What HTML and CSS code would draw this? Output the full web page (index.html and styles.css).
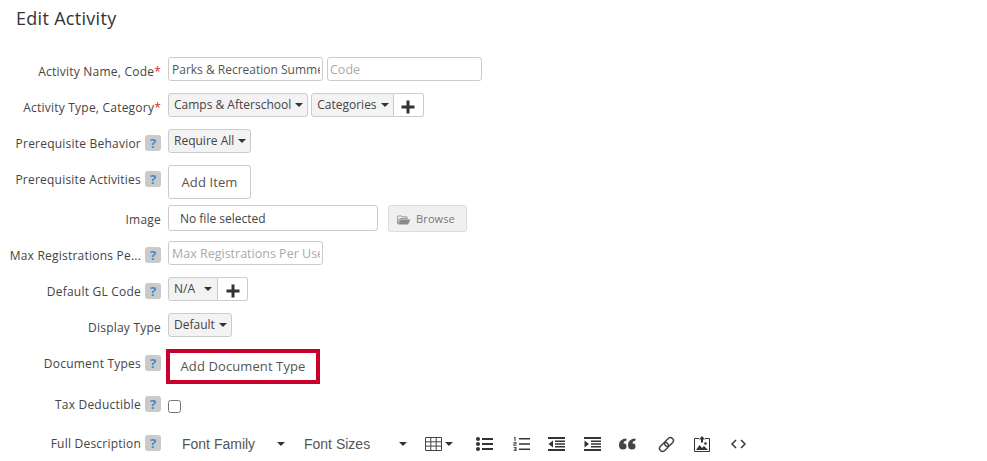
FILE: index.html
```html
<html lang="en">
  <head>
    <meta charset="UTF-8" />
    <title>Edit Activity</title>
    <link rel="stylesheet" href="styles.css">
  </head>
  <body>
    <h1 class="title">Edit Activity</h1>

    <form class="form">
      <!-- Name -->
      <div class="row">
        <label class="label">Activity Name, Code<span class="req">*</span></label>
        <div class="controls">
          <input class="input input-name" type="text" value="Parks &amp; Recreation Summer Camp" />
          <input class="input input-code" type="text" placeholder="Code" />
        </div>
      </div>

      <!-- Type -->
      <div class="row">
        <label class="label">Activity Type, Category<span class="req">*</span></label>
        <div class="controls controls-type">
          <button type="button" class="select">Camps &amp; Afterschool<span class="caret"></span></button>
          <div class="group">
            <button type="button" class="select select-cat">Categories<span class="caret"></span></button>
            <button type="button" class="plus">
              <svg width="14" height="14" viewBox="0 0 14 14"><path d="M5.500 0.500h3v5h5v3h-5v5h-3v-5h-5v-3h5z" fill="#333"/></svg>
            </button>
          </div>
        </div>
      </div>

      <div class="row">
        <label class="label">Prerequisite Behavior<span class="help">?</span></label>
        <div class="controls">
          <button type="button" class="select">Require All<span class="caret"></span></button>
        </div>
      </div>

      <div class="row row-tall">
        <label class="label">Prerequisite Activities<span class="help">?</span></label>
        <div class="controls">
          <button type="button" class="btn btn-item">Add Item</button>
        </div>
      </div>

      <!-- Image -->
      <div class="row row-image">
        <label class="label">Image</label>
        <div class="controls controls-file">
          <div class="file-name">No file selected</div>
          <button type="button" class="browse">
            <svg width="14" height="10" viewBox="0 0 15 11"><path d="M0.500 9.500v-7.500q0-1 1-1h3l1 1h4.500q1 0 1 1v1h-8z" fill="none" stroke="#8a8a8a"/><path d="M3.500 5h11l-2.500 5.500h-11z" fill="#8a8a8a"/></svg>
            Browse
          </button>
        </div>
      </div>

      <div class="row">
        <label class="label">Max Registrations Pe...<span class="help">?</span></label>
        <div class="controls">
          <input class="input input-name" type="text" placeholder="Max Registrations Per User" />
        </div>
      </div>

      <div class="row">
        <label class="label">Default GL Code<span class="help">?</span></label>
        <div class="controls">
          <div class="group">
            <button type="button" class="select select-gl">N/A<span class="caret"></span></button>
            <button type="button" class="plus">
              <svg width="14" height="14" viewBox="0 0 14 14"><path d="M5.500 0.500h3v5h5v3h-5v5h-3v-5h-5v-3h5z" fill="#333"/></svg>
            </button>
          </div>
        </div>
      </div>

      <div class="row">
        <label class="label">Display Type</label>
        <div class="controls">
          <button type="button" class="select">Default<span class="caret"></span></button>
        </div>
      </div>

      <div class="row row-doc">
        <label class="label">Document Types<span class="help">?</span></label>
        <div class="controls">
          <button type="button" class="btn btn-doc">Add Document Type</button>
        </div>
      </div>

      <div class="row row-tax">
        <label class="label label-tax">Tax Deductible<span class="help">?</span></label>
        <div class="controls">
          <input class="check" type="checkbox" />
        </div>
      </div>

      <!-- Editor toolbar -->
      <div class="row row-editor">
        <label class="label label-editor">Full Description<span class="help">?</span></label>
        <div class="toolbar">
          <span class="tool-select tool-family">Font Family<span class="caret"></span></span>
          <span class="tool-select tool-size">Font Sizes<span class="caret"></span></span>
          <span class="tool tool-table">
            <svg width="17" height="14" viewBox="0 0 17 14"><path d="M0.500 0.500h16v13h-16zM0.500 4.800h16M0.500 9.100h16M5.800 0.500v13M11.200 0.500v13" fill="none" stroke="#444"/></svg>
            <span class="caret"></span>
          </span>
          <span class="tool tool-ul">
            <svg width="17" height="14" viewBox="0 0 17 14"><g fill="#333"><circle cx="2" cy="2" r="2"/><circle cx="2" cy="7" r="2"/><circle cx="2" cy="12" r="2"/><path d="M6 1h11v2h-11zM6 6h11v2h-11zM6 11h11v2h-11z"/></g></svg>
          </span>
          <span class="tool tool-ol">
            <svg width="17" height="14" viewBox="0 0 17 14"><g fill="#333"><path d="M6 1h11v1.500h-11zM6 6.200h11v1.500h-11zM6 11.500h11v1.500h-11z"/><path d="M1 0h1.500v4h-1v-3h-.5zM0.500 5h3v2.300h-2v.700h2v.800h-3v-2.300h2v-.700h-2zM0.500 10h3v4h-3v-.800h2v-.800h-1.500v-.700h1.500v-.900h-2z"/></g></svg>
          </span>
          <span class="tool tool-out">
            <svg width="17" height="14" viewBox="0 0 17 14"><g fill="#333"><path d="M0 0h17v2h-17zM7 3.500h10v1.500h-10zM7 6.300h10v1.500h-10zM7 9.100h10v1.500h-10zM0 12h17v2h-17zM5 3.500v7l-4.500-3.500z"/></g></svg>
          </span>
          <span class="tool tool-in">
            <svg width="17" height="14" viewBox="0 0 17 14"><g fill="#333"><path d="M0 0h17v2h-17zM7 3.500h10v1.500h-10zM7 6.300h10v1.500h-10zM7 9.100h10v1.500h-10zM0 12h17v2h-17zM0.500 3.500v7l4.500-3.500z"/></g></svg>
          </span>
          <span class="tool tool-quote">
            <svg width="17" height="12" viewBox="0 0 17 12"><g fill="#444"><path d="M7.500 0.500v2q-3 .5-3 3h1q2 0 2 3t-3.500 3q-4 0-4-4.500q0-6 7.500-6.500z"/><path d="M16.500 0.500v2q-3 .5-3 3h1q2 0 2 3t-3.500 3q-4 0-4-4.500q0-6 7.500-6.500z"/></g></svg>
          </span>
          <span class="tool tool-link">
            <svg width="17" height="17" viewBox="0 0 17 17"><g fill="none" stroke="#444" stroke-width="1.500" transform="rotate(-45 8.500 8.500)"><rect x="0" y="5.500" width="10" height="6" rx="3"/><rect x="7" y="5.500" width="10" height="6" rx="3"/></g></svg>
          </span>
          <span class="tool tool-image">
            <svg width="16" height="16" viewBox="0 0 16 16"><path d="M5 2.500h-4.500v13h15v-13h-4.500" fill="none" stroke="#333"/><path d="M8 0l3 3.500h-2v3h-2v-3h-2z" fill="#333"/><path d="M2 14l3.500-5 2.500 3 2-2 4 4z" fill="#333"/><circle cx="11.500" cy="7.500" r="1.300" fill="#333"/></svg>
          </span>
          <span class="tool tool-code">
            <svg width="15" height="10" viewBox="0 0 15 10"><path d="M5 1l-4 4 4 4M10 1l4 4-4 4" fill="none" stroke="#333" stroke-width="1.500"/></svg>
          </span>
        </div>
      </div>
    </form>
  </body>
</html>
```

FILE: styles.css
```css
body {
  margin: 0;
  height: 461px;
  overflow: hidden;
  background-color: white;
  font-family: "Open Sans", sans-serif;
  font-size: 12px;
  color: #444;
}
.title {
  margin: 0;
  padding: 7px 0 0 16px;
  font-size: 18px;
  font-weight: 500;
  line-height: 23px;
  letter-spacing: 0.3px;
  color: #333;
}
.form {
  padding-top: 27px;
}
.row {
  display: flex;
  height: 24px;
  margin-bottom: 12px;
}
.row-tall {
  height: 34px;
  margin-bottom: 6px;
}
.row-image {
  height: 26px;
  margin-bottom: 10px;
}
.row-doc {
  height: 35px;
  margin-bottom: 16px;
}
.row-tax {
  height: 14px;
  margin-bottom: 16px;
}
.label {
  width: 161px;
  flex-shrink: 0;
  padding-top: 5px;
  text-align: right;
  line-height: 19px;
  letter-spacing: 0.22px;
  white-space: nowrap;
  color: #444;
}
.label-tax {
  padding-top: 0;
  margin-top: -5px;
}
.label-editor {
  padding-top: 4px;
}
.req {
  color: #c9302c;
}
.help {
  display: inline-block;
  width: 16px;
  height: 16px;
  margin-left: 4px;
  border-radius: 3px;
  background-color: #cacaca;
  color: #428bca;
  font-weight: 700;
  font-size: 13px;
  line-height: 16px;
  text-align: center;
  letter-spacing: 0;
}
.controls {
  display: flex;
  gap: 4px;
  margin-left: 7px;
}
.controls-type {
  gap: 3px;
}
.controls-file {
  gap: 10px;
}
.input {
  box-sizing: border-box;
  height: 24px;
  padding: 0 2px 0 3px;
  border: 1px solid #ccc;
  border-radius: 3px;
  font-family: "Open Sans", sans-serif;
  font-size: 12px;
  color: #555;
  background-color: white;
}
.input::placeholder {
  font-size: 12.500px;
  color: #aaa;
}
.input-name {
  width: 155px;
}
.input-code {
  width: 155px;
  padding-left: 2px;
}
.select {
  box-sizing: border-box;
  height: 24px;
  padding: 0 4px 2px 5px;
  border: 1px solid #ccc;
  border-radius: 3px;
  background-color: #f3f3f3;
  font-family: "Open Sans", sans-serif;
  font-size: 12px;
  color: #444;
  white-space: nowrap;
}
.select-cat {
  border-radius: 3px 0 0 3px;
}
.select-gl {
  width: 50px;
  border-radius: 3px 0 0 3px;
  text-align: left;
}
.select-gl .caret {
  margin-left: 9px;
}
.group {
  display: flex;
}
.plus {
  box-sizing: border-box;
  width: 30px;
  height: 24px;
  padding: 0;
  border: 1px solid #ccc;
  border-left: none;
  border-radius: 0 3px 3px 0;
  background-color: white;
}
.plus svg {
  display: block;
  margin: 3px auto 0;
}
.caret {
  display: inline-block;
  margin-left: 4px;
  border-top: 4px solid #333;
  border-left: 4px solid transparent;
  border-right: 4px solid transparent;
  vertical-align: middle;
}
.btn {
  box-sizing: border-box;
  background-color: white;
  font-family: "Open Sans", sans-serif;
  font-size: 13px;
  letter-spacing: 0.1px;
  color: #555;
}
.btn-item {
  width: 83px;
  height: 34px;
  padding-bottom: 2px;
  border: 1px solid #ccc;
  border-radius: 3px;
}
.btn-doc {
  width: 154px;
  height: 35px;
  margin-left: -2px;
  border: 4px solid #c8002b;
  padding: 0 0 2px;
}
.file-name {
  box-sizing: border-box;
  width: 210px;
  height: 26px;
  padding: 1px 0 0 11px;
  border: 1px solid #ccc;
  border-radius: 3px;
  line-height: 24px;
  color: #444;
}
.browse {
  box-sizing: border-box;
  width: 79px;
  height: 27px;
  padding: 0 3px 0 0;
  border: 1px solid #ddd;
  border-radius: 3px;
  background-color: #f0f0f0;
  font-family: "Open Sans", sans-serif;
  font-size: 11px;
  letter-spacing: 0.1px;
  color: #777;
}
.browse svg {
  vertical-align: -2px;
  margin-right: 2px;
}
.check {
  width: 13px;
  height: 13px;
  margin: 0;
}
.toolbar {
  display: flex;
  align-items: center;
  height: 24px;
  margin-left: 21px;
  margin-top: 2px;
  font-family: "Liberation Sans", sans-serif;
  font-size: 14px;
  color: #555;
}
.tool-select {
  display: flex;
  align-items: center;
  justify-content: space-between;
}
.tool-family {
  width: 103px;
}
.tool-size {
  width: 103px;
  margin-left: 19px;
}
.tool {
  display: flex;
  align-items: center;
}
.tool svg {
  display: block;
}
.tool-table {
  margin-left: 18px;
}
.tool-table .caret {
  margin-left: 3px;
}
.tool-ul { margin-left: 23px; }
.tool-ol { margin-left: 20px; }
.tool-out { margin-left: 18px; }
.tool-in { margin-left: 19px; }
.tool-quote { margin-left: 18px; }
.tool-link { margin-left: 22px; }
.tool-image { margin-left: 19px; }
.tool-code { margin-left: 21px; }
```
